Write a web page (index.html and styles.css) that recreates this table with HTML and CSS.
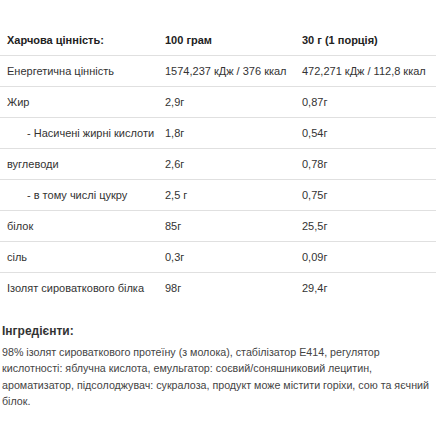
FILE: index.html
```html
<!DOCTYPE html>
<html lang="uk">
<head>
<meta charset="utf-8">
<link rel="stylesheet" href="styles.css">
</head>
<body>
<div class="page">
  <table class="nutri">
    <colgroup><col class="c1"><col class="c2"><col class="c3"></colgroup>
    <tr class="head"><td>Харчова цінність:</td><td>100 грам</td><td>30 г (1 порція)</td></tr>
    <tr><td>Енергетична цінність</td><td>1574,237 кДж / 376 ккал</td><td>472,271 кДж / 112,8 ккал</td></tr>
    <tr><td>Жир</td><td>2,9г</td><td>0,87г</td></tr>
    <tr><td class="sub">- Насичені жирні кислоти</td><td>1,8г</td><td>0,54г</td></tr>
    <tr><td>вуглеводи</td><td>2,6г</td><td>0,78г</td></tr>
    <tr><td class="sub">- в тому числі цукру</td><td>2,5 г</td><td>0,75г</td></tr>
    <tr><td>білок</td><td>85г</td><td>25,5г</td></tr>
    <tr><td>сіль</td><td>0,3г</td><td>0,09г</td></tr>
    <tr class="last"><td>Ізолят сироваткового білка</td><td>98г</td><td>29,4г</td></tr>
  </table>
  <h3 class="ing-title">Інгредієнти:</h3>
  <p class="ing-text">98% ізолят сироваткового протеїну (з молока), стабілізатор Е414, регулятор кислотності: яблучна кислота, емульгатор: соєвий/соняшниковий лецитин, ароматизатор, підсолоджувач: сукралоза, продукт може містити горіхи, сою та яєчний білок.</p>
</div>
</body>
</html>
```
FILE: styles.css
```css
html, body { margin: 0; padding: 0; background: #fff; }
body { font-family: "Liberation Sans", Arial, sans-serif; color: #333; }
.page { width: 440px; padding-top: 25px; }
.nutri { width: 436px; border-collapse: collapse; table-layout: fixed; font-size: 11px; }
.c1 { width: 158px; }
.c2 { width: 137px; }
.nutri td { height: 30px; padding: 0 0 0 7px; border-bottom: 1px solid #e0e0e0; vertical-align: middle; white-space: nowrap; color: #333; }
.nutri .head td { font-weight: bold; color: #222; }
.nutri .last td { border-bottom: none; }
.nutri td.sub { padding-left: 27px; }
.ing-title { margin: 21px 0 0 2px; font-size: 12px; font-weight: bold; color: #333; }
.ing-text { margin: 6px 0 0 2px; width: 436px; font-size: 10.7px; line-height: 16.3px; color: #444; }
```
